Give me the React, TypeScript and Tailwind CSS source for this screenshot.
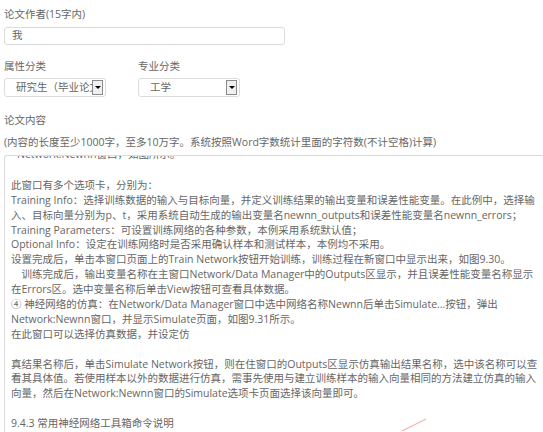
import React from 'react';

const font = { fontFamily: '"Open Sans", "Noto Sans CJK SC", sans-serif' };

const lines: string[] = [
  '',
  '此窗口有多个选项卡，分别为：',
  'Training Info：选择训练数据的输入与目标向量，并定义训练结果的输出变量和误差性能变量。在此例中，选择输',
  '入、目标向量分别为p、t，采用系统自动生成的输出变量名newnn_outputs和误差性能变量名newnn_errors；',
  'Training Parameters：可设置训练网络的各种参数，本例采用系统默认值；',
  'Optional Info：设定在训练网络时是否采用确认样本和测试样本，本例均不采用。',
  '设置完成后，单击本窗口页面上的Train Network按钮开始训练，训练过程在新窗口中显示出来，如图9.30。',
  '　训练完成后，输出变量名称在主窗口Network/Data Manager中的Outputs区显示，并且误差性能变量名称显示',
  '在Errors区。选中变量名称后单击View按钮可查看具体数据。',
  '④ 神经网络的仿真：在Network/Data Manager窗口中选中网络名称Newnn后单击Simulate...按钮，弹出',
  'Network:Newnn窗口，并显示Simulate页面，如图9.31所示。',
  '在此窗口可以选择仿真数据，并设定仿',
  '',
  '真结果名称后，单击Simulate Network按钮，则在住窗口的Outputs区显示仿真输出结果名称，选中该名称可以查',
  '看其具体值。若使用样本以外的数据进行仿真，需事先使用与建立训练样本的输入向量相同的方法建立仿真的输入',
  '向量，然后在Network:Newnn窗口的Simulate选项卡页面选择该向量即可。',
  '',
  '9.4.3 常用神经网络工具箱命令说明',
];

const SelectBox: React.FC<{ text: string }> = ({ text }) => (
  <div className="w-[102px] h-[19px] border border-[#dcdcdc] rounded-[3px] flex items-center pl-[11px] pr-[2px] bg-white">
    <span className="flex-1 min-w-0 text-[10.5px] whitespace-nowrap overflow-hidden">{text}</span>
    <div className="w-[11px] h-[15px] border border-[#8a8a8a] bg-[#f0f0f0] flex items-center justify-center shrink-0">
      <div className="w-0 h-0 border-l-[3px] border-r-[3px] border-t-[3px] border-l-transparent border-r-transparent border-t-black" />
    </div>
  </div>
);

export default function App() {
  return (
    <div className="w-[543px] h-[432px] overflow-hidden bg-white relative pl-[4px] text-[#666]" style={font}>
      <div className="pt-[8px] text-[10.5px] leading-[13px]">论文作者(15字内)</div>
      <div className="mt-[6px] w-[281px] h-[18px] border border-[#dcdcdc] rounded-[3px] flex items-center pl-[7px] text-[10.5px]">我</div>

      <div className="mt-[15px] flex">
        <div className="w-[134px]">
          <div className="text-[10.5px] leading-[13px]">属性分类</div>
          <div className="mt-[5px]"><SelectBox text="研究生（毕业论文" /></div>
        </div>
        <div>
          <div className="text-[10.5px] leading-[13px]">专业分类</div>
          <div className="mt-[5px]"><SelectBox text="工学" /></div>
        </div>
      </div>

      <div className="mt-[17px] text-[10.5px] leading-[13px]">论文内容</div>
      <div className="mt-[9px] text-[10.5px] leading-[13px] whitespace-nowrap">(内容的长度至少1000字，至多10万字。系统按照Word字数统计里面的字符数(不计空格)计算)</div>

      <div className="mt-[6px] h-[300px] border-l border-t border-[#dcdcdc] rounded-tl-[3px] overflow-hidden relative">
        <div className="absolute left-[12px] top-[-9px] text-[10.5px] leading-[15px] whitespace-nowrap">Network:Newnn窗口，如图所示。</div>
        <div className="pl-[6px] pt-[7px] text-[10.5px] whitespace-nowrap">
          {lines.map((l, i) => (
            <div key={i} className="h-[14.9px] leading-[14.9px]">{l}</div>
          ))}
        </div>
      </div>

      <svg className="absolute left-[400px] top-[418px]" width="30" height="14" viewBox="0 0 30 14">
        <line x1="26" y1="1" x2="2" y2="13" stroke="#f4a0a0" strokeWidth="1" />
      </svg>
    </div>
  );
}
